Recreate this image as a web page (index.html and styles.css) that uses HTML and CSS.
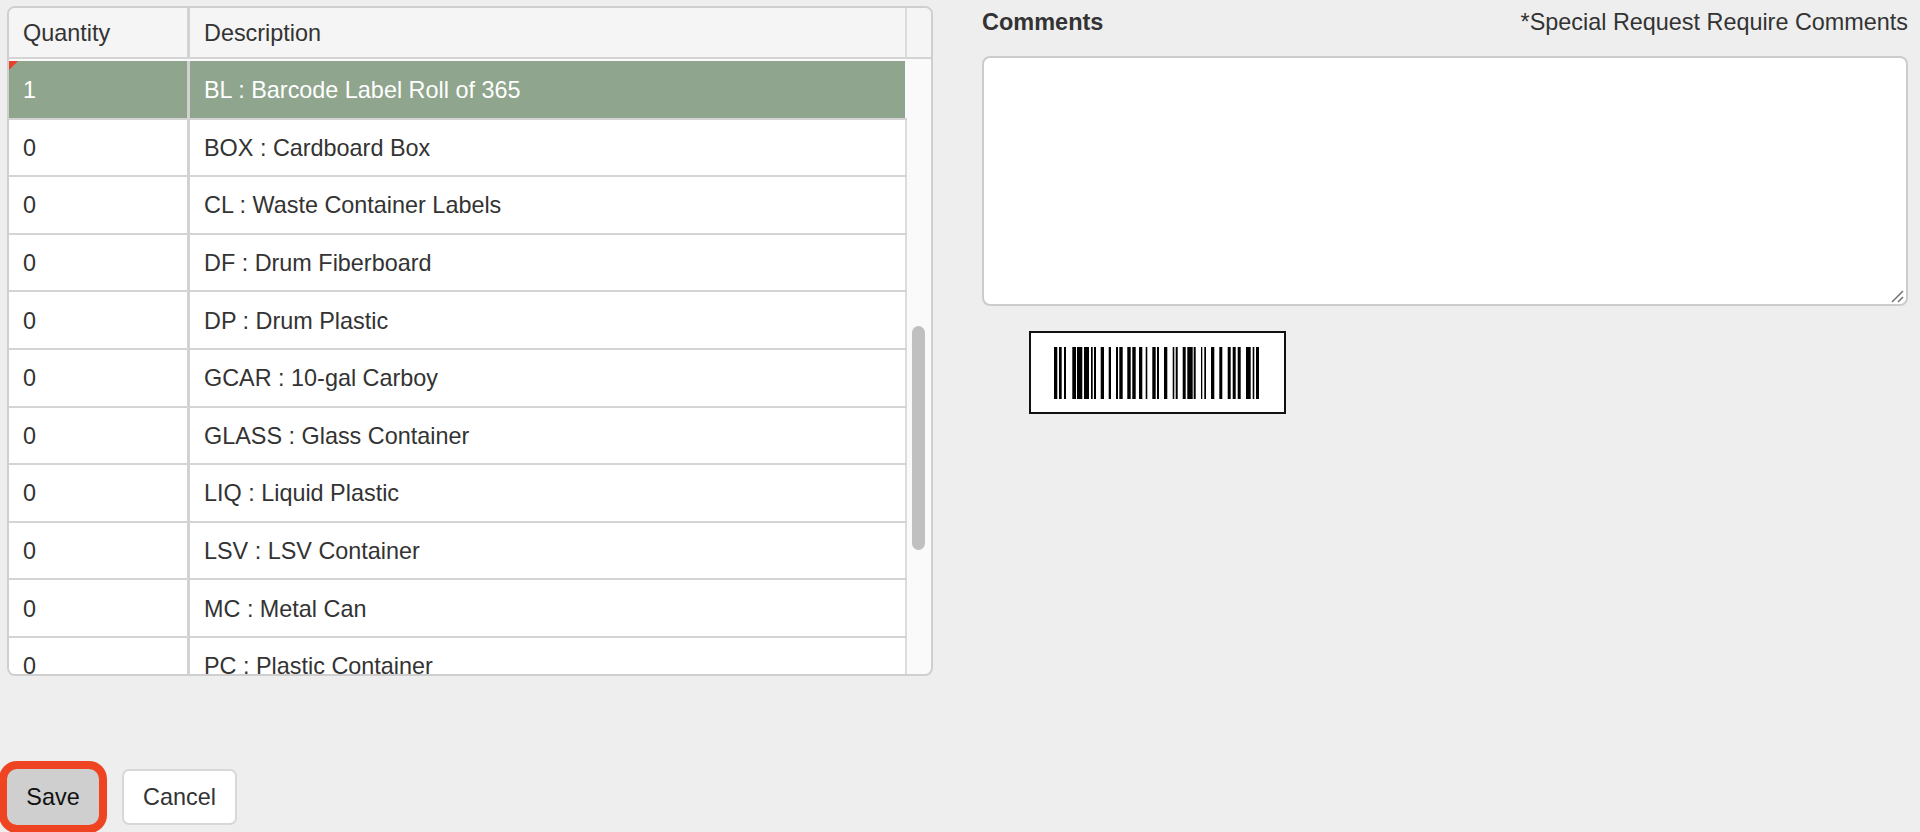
FILE: index.html
```html
<!DOCTYPE html>
<html lang="en">
<head>
<meta charset="utf-8">
<title>Supply request</title>
<link rel="stylesheet" href="styles.css">
</head>
<body>
<div class="top">
  <section class="grid">
    <div class="head">
      <div class="cell qty">Quantity</div>
      <div class="cell desc">Description</div>
      <div class="corner"></div>
    </div>
    <div class="body">
      <div class="rows">
        <div class="row selected"><div class="cell qty">1</div><div class="cell desc">BL : Barcode Label Roll of 365</div></div>
        <div class="row"><div class="cell qty">0</div><div class="cell desc">BOX : Cardboard Box</div></div>
        <div class="row"><div class="cell qty">0</div><div class="cell desc">CL : Waste Container Labels</div></div>
        <div class="row"><div class="cell qty">0</div><div class="cell desc">DF : Drum Fiberboard</div></div>
        <div class="row"><div class="cell qty">0</div><div class="cell desc">DP : Drum Plastic</div></div>
        <div class="row"><div class="cell qty">0</div><div class="cell desc">GCAR : 10-gal Carboy</div></div>
        <div class="row"><div class="cell qty">0</div><div class="cell desc">GLASS : Glass Container</div></div>
        <div class="row"><div class="cell qty">0</div><div class="cell desc">LIQ : Liquid Plastic</div></div>
        <div class="row"><div class="cell qty">0</div><div class="cell desc">LSV : LSV Container</div></div>
        <div class="row"><div class="cell qty">0</div><div class="cell desc">MC : Metal Can</div></div>
        <div class="row"><div class="cell qty">0</div><div class="cell desc">PC : Plastic Container</div></div>
      </div>
      <div class="track"><div class="thumb"></div></div>
    </div>
  </section>
  <section class="side">
    <div class="side-head">
      <span class="label">Comments</span>
      <span class="hint">*Special Request Require Comments</span>
    </div>
    <div class="comments"><svg class="grip" width="14" height="14" viewBox="0 0 14 14"><path d="M1 13 12 2M7 13 12 8" stroke="#777" stroke-width="1.6" fill="none"/></svg></div>
    <div class="barcode"><svg width="207" height="52" viewBox="0 0 207 52"><path fill="#000" d="M0 0h3.3v52H0zM5 0h2.7v52H5zM10 0h2v52h-2zM18.3 0h3.7v52h-3.7zM23 0h5.3v52H23zM30 0h5v52h-5zM37 0h1.7v52H37zM40 0h2v52h-2zM46.7 0h3.3v52h-3.3zM54.7 0h2.3v52h-2.3zM62 0h2v52h-2zM65.3 0h3.4v52h-3.4zM73.3 0h3.4v52h-3.4zM78.3 0h3.4v52h-3.4zM85 0h3.3v52H85zM91.7 0h1.6v52h-1.6zM98.3 0h3.4v52h-3.4zM103 0h2v52h-2zM110 0h3.3v52H110zM118.7 0h1.6v52h-1.6zM121.7 0h2v52h-2zM128.7 0h3v52h-3zM133.3 0h5.4v52h-5.4zM139.7 0h2v52h-2zM147 0h1.3v52H147zM150.3 0h1.7v52h-1.7zM157 0h3.3v52H157zM165.3 0h3v52h-3zM173.7 0h3v52h-3zM178.7 0h3v52h-3zM183.7 0h3v52h-3zM192 0h4.7v52H192zM198.7 0h1.6v52h-1.6zM202 0h3v52h-3z"/></svg></div>
  </section>
</div>
<div class="actions">
  <button class="btn save" type="button">Save</button>
  <button class="btn" type="button">Cancel</button>
</div>
</body>
</html>
```
FILE: styles.css
```css
* { box-sizing: border-box; }
html, body { height: 100%; }
body {
  margin: 0;
  height: 832px;
  overflow: hidden;
  background: #eeeeee;
  color: #333333;
  font-family: "Liberation Sans", Arial, sans-serif;
  font-size: 23.4px;
  display: flex;
  flex-direction: column;
}
.top {
  display: flex;
  align-items: flex-start;
  padding: 6px 12px 0 7px;
  gap: 49px;
}
.grid {
  width: 926px;
  height: 670px;
  flex: none;
  border: 2px solid #cfcfcf;
  border-radius: 8px;
  overflow: hidden;
  background: #fafafa;
  display: flex;
  flex-direction: column;
}
.head {
  height: 51px;
  flex: none;
  display: flex;
  background: #f5f5f5;
  border-bottom: 2px solid #d4d4d4;
}
.cell {
  padding: 2px 0 0 14px;
  display: flex;
  align-items: center;
  white-space: nowrap;
}
.qty { width: 181px; flex: none; border-right: 3px solid #d2d2d2; }
.desc { width: 717px; flex: none; border-right: 2px solid #dcdcdc; }
.corner { flex: 1; }
.body {
  flex: 1;
  min-height: 0;
  display: flex;
  padding-top: 2px;
  overflow: hidden;
}
.rows { width: 898px; flex: none; }
.row {
  height: 57.6px;
  display: flex;
  background: #ffffff;
  border-bottom: 2px solid #d4d4d4;
  position: relative;
}
.selected {
  height: 58.6px;
  background: #8fa58d;
  color: #ffffff;
}
.selected::before {
  content: "";
  position: absolute;
  left: 0;
  top: 0;
  border-style: solid;
  border-width: 9px 9px 0 0;
  border-color: #e8402a transparent transparent transparent;
}
.selected .desc { border-right-color: #fafafa; }
.track { flex: 1; padding: 265px 6px 0 5px; }
.thumb {
  height: 224px;
  border-radius: 7px;
  background: #c0c0c0;
}
.side { flex: 1; min-width: 0; }
.side-head {
  display: flex;
  justify-content: space-between;
  align-items: baseline;
  margin-top: 3px;
}
.label { font-weight: 700; font-size: 23.5px; }
.comments {
  height: 250px;
  margin-top: 20px;
  background: #ffffff;
  border: 2px solid #cccccc;
  border-radius: 8px;
  position: relative;
}
.grip { position: absolute; right: 1px; bottom: 1px; }
.barcode {
  width: 257px;
  height: 83px;
  margin: 25px 0 0 47px;
  background: #ffffff;
  border: 2px solid #111111;
  display: flex;
  align-items: center;
  justify-content: center;
}
.barcode svg { display: block; }
.actions {
  display: flex;
  align-items: center;
  gap: 23px;
  margin-top: 93px;
  padding-left: 7px;
}
.btn {
  width: 115px;
  height: 56px;
  padding: 0;
  font: inherit;
  color: #333333;
  background: #ffffff;
  border: 2px solid #d8d8d8;
  border-radius: 7px;
}
.save {
  width: 92px;
  color: #111111;
  background: #cfcfcf;
  border: 0;
  box-shadow: 0 0 0 8px #ee4422;
  border-radius: 10px;
}
```
